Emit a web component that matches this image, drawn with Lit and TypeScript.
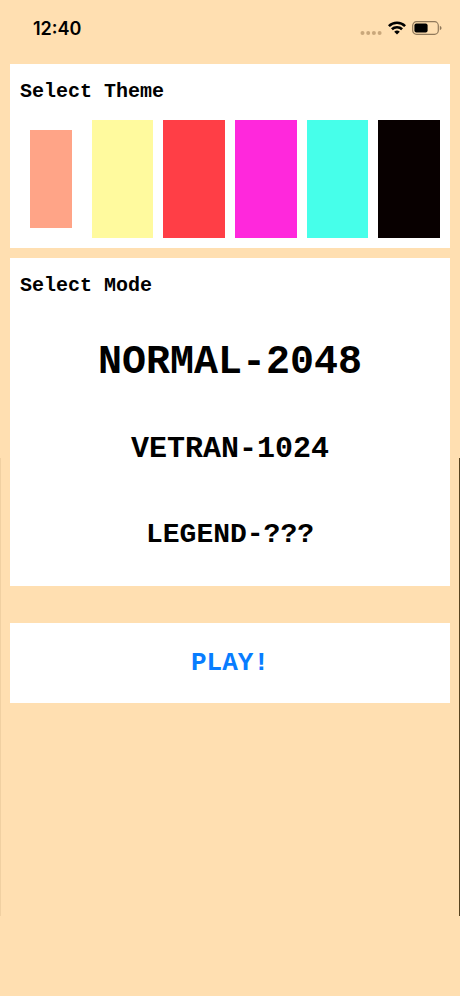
import { LitElement, html, css } from "lit";
import { customElement, state } from "lit/decorators.js";
import { classMap } from "lit/directives/class-map.js";
import { styleMap } from "lit/directives/style-map.js";

const THEMES = [
  { name: "Peach", color: "#ffa487" },
  { name: "Lemon", color: "#fffa9e" },
  { name: "Red", color: "#ff3e46" },
  { name: "Magenta", color: "#ff28dc" },
  { name: "Aqua", color: "#46ffea" },
  { name: "Black", color: "#080000" },
];

const MODES = ["NORMAL-2048", "VETRAN-1024", "LEGEND-???"];

@customElement("status-bar")
class StatusBar extends LitElement {
  static styles = css`
    :host {
      display: flex;
      align-items: center;
      justify-content: space-between;
      height: 64px;
      padding: 0 18px 8px 33px;
      box-sizing: border-box;
      color: #000;
    }
    .time {
      font: 600 18px/24px Inter, sans-serif;
      padding-top: 2px;
    }
    .icons {
      display: flex;
      align-items: center;
      gap: 6px;
    }
    svg {
      display: block;
    }
  `;

  render() {
    return html`
      <span class="time">12:40</span>
      <div class="icons">
        <svg width="22" height="16" viewBox="0 0 22 16" fill="#c9a77b" aria-hidden="true">
          <circle cx="2.5" cy="13" r="2" />
          <circle cx="8.2" cy="13" r="2" />
          <circle cx="13.9" cy="13" r="2" />
          <circle cx="19.6" cy="13" r="2" />
        </svg>
        <svg width="18" height="14" viewBox="0 0 18 14" fill="none" stroke="#000" stroke-width="2.6" aria-hidden="true">
          <path d="M0.9 5.1 A11.6 11.6 0 0 1 17.1 5.1" />
          <path d="M3.9 8.3 A7.3 7.3 0 0 1 14.1 8.3" />
          <path d="M9 13.6 L6.2 10.8 A4 4 0 0 1 11.8 10.8 Z" fill="#000" stroke="none" />
        </svg>
        <svg width="30" height="14" viewBox="0 0 30 14" aria-hidden="true">
          <rect x="0.7" y="0.7" width="25.6" height="12.6" rx="3.8" fill="none" stroke="#8f785a" stroke-width="1.2" />
          <rect x="2.4" y="2.4" width="13.2" height="9.2" rx="2" />
          <path d="M27.8 4.7 Q29.6 5.4 29.6 7 Q29.6 8.6 27.8 9.3 Z" fill="#8f785a" />
        </svg>
      </div>
    `;
  }
}

@customElement("app-root")
class AppRoot extends LitElement {
  @state() private theme = 0;
  @state() private mode = 0;

  static styles = css`
    :host {
      display: block;
      position: relative;
      min-height: 100vh;
      background: #ffdfb1;
      font-family: "Liberation Mono", monospace;
      font-weight: 700;
      color: #000;
    }
    .edge {
      position: absolute;
      top: 46%;
      right: 0;
      width: 1px;
      height: 46%;
      background: #57431f;
    }
    .edge.left {
      right: auto;
      left: 0;
      background: #f0d0a2;
    }
    main {
      display: flex;
      flex-direction: column;
      gap: 10px;
      padding: 0 10px;
    }
    .card {
      padding: 10px;
      background: #fff;
    }
    .card.choice {
      padding-bottom: 8px;
    }
    .card.play {
      margin-top: 27px;
      padding: 0;
    }
    h2 {
      margin: 0;
      font-size: 20px;
      line-height: 36px;
    }
    .themes {
      display: grid;
      grid-template-columns: repeat(6, 1fr);
      gap: 10px;
      height: 118px;
      margin: 10px 0 0;
    }
    .theme {
      display: flex;
    }
    .theme.selected {
      padding: 10px;
    }
    .theme input {
      appearance: none;
      flex: 1;
      min-width: 0;
      margin: 0;
      cursor: pointer;
    }
    .modes {
      display: flex;
      flex-direction: column;
      padding-top: 16px;
    }
    button {
      display: block;
      width: 100%;
      margin: 0;
      padding: 0;
      border: 0;
      background: none;
      font: inherit;
      color: inherit;
      cursor: pointer;
      text-align: center;
    }
    .mode {
      font-size: 30px;
      line-height: 86px;
    }
    .mode.compact {
      font-size: 28px;
    }
    .mode.selected {
      font-size: 40px;
    }
    .play button {
      font-size: 26px;
      line-height: 80px;
      color: #087dff;
    }
  `;

  render() {
    return html`
      <status-bar></status-bar>
      <main>
        <section class="card">
          <h2 id="theme-title">Select Theme</h2>
          <div class="themes" role="radiogroup" aria-labelledby="theme-title">
            ${THEMES.map(
              (t, i) => html`
                <label class=${classMap({ theme: true, selected: i === this.theme })}>
                  <input
                    type="radio"
                    name="theme"
                    aria-label=${t.name}
                    style=${styleMap({ background: t.color })}
                    .checked=${i === this.theme}
                    @change=${() => (this.theme = i)}
                  />
                </label>
              `
            )}
          </div>
        </section>
        <section class="card choice">
          <h2>Select Mode</h2>
          <div class="modes">
            ${MODES.map(
              (m, i) => html`
                <button
                  type="button"
                  class=${classMap({ mode: true, compact: m.includes("?"), selected: i === this.mode })}
                  aria-pressed=${i === this.mode ? "true" : "false"}
                  @click=${() => (this.mode = i)}
                >${m}</button>
              `
            )}
          </div>
        </section>
        <section class="card play">
          <button type="button">PLAY!</button>
        </section>
      </main>
      <div class="edge"></div>
      <div class="edge left"></div>
    `;
  }
}
